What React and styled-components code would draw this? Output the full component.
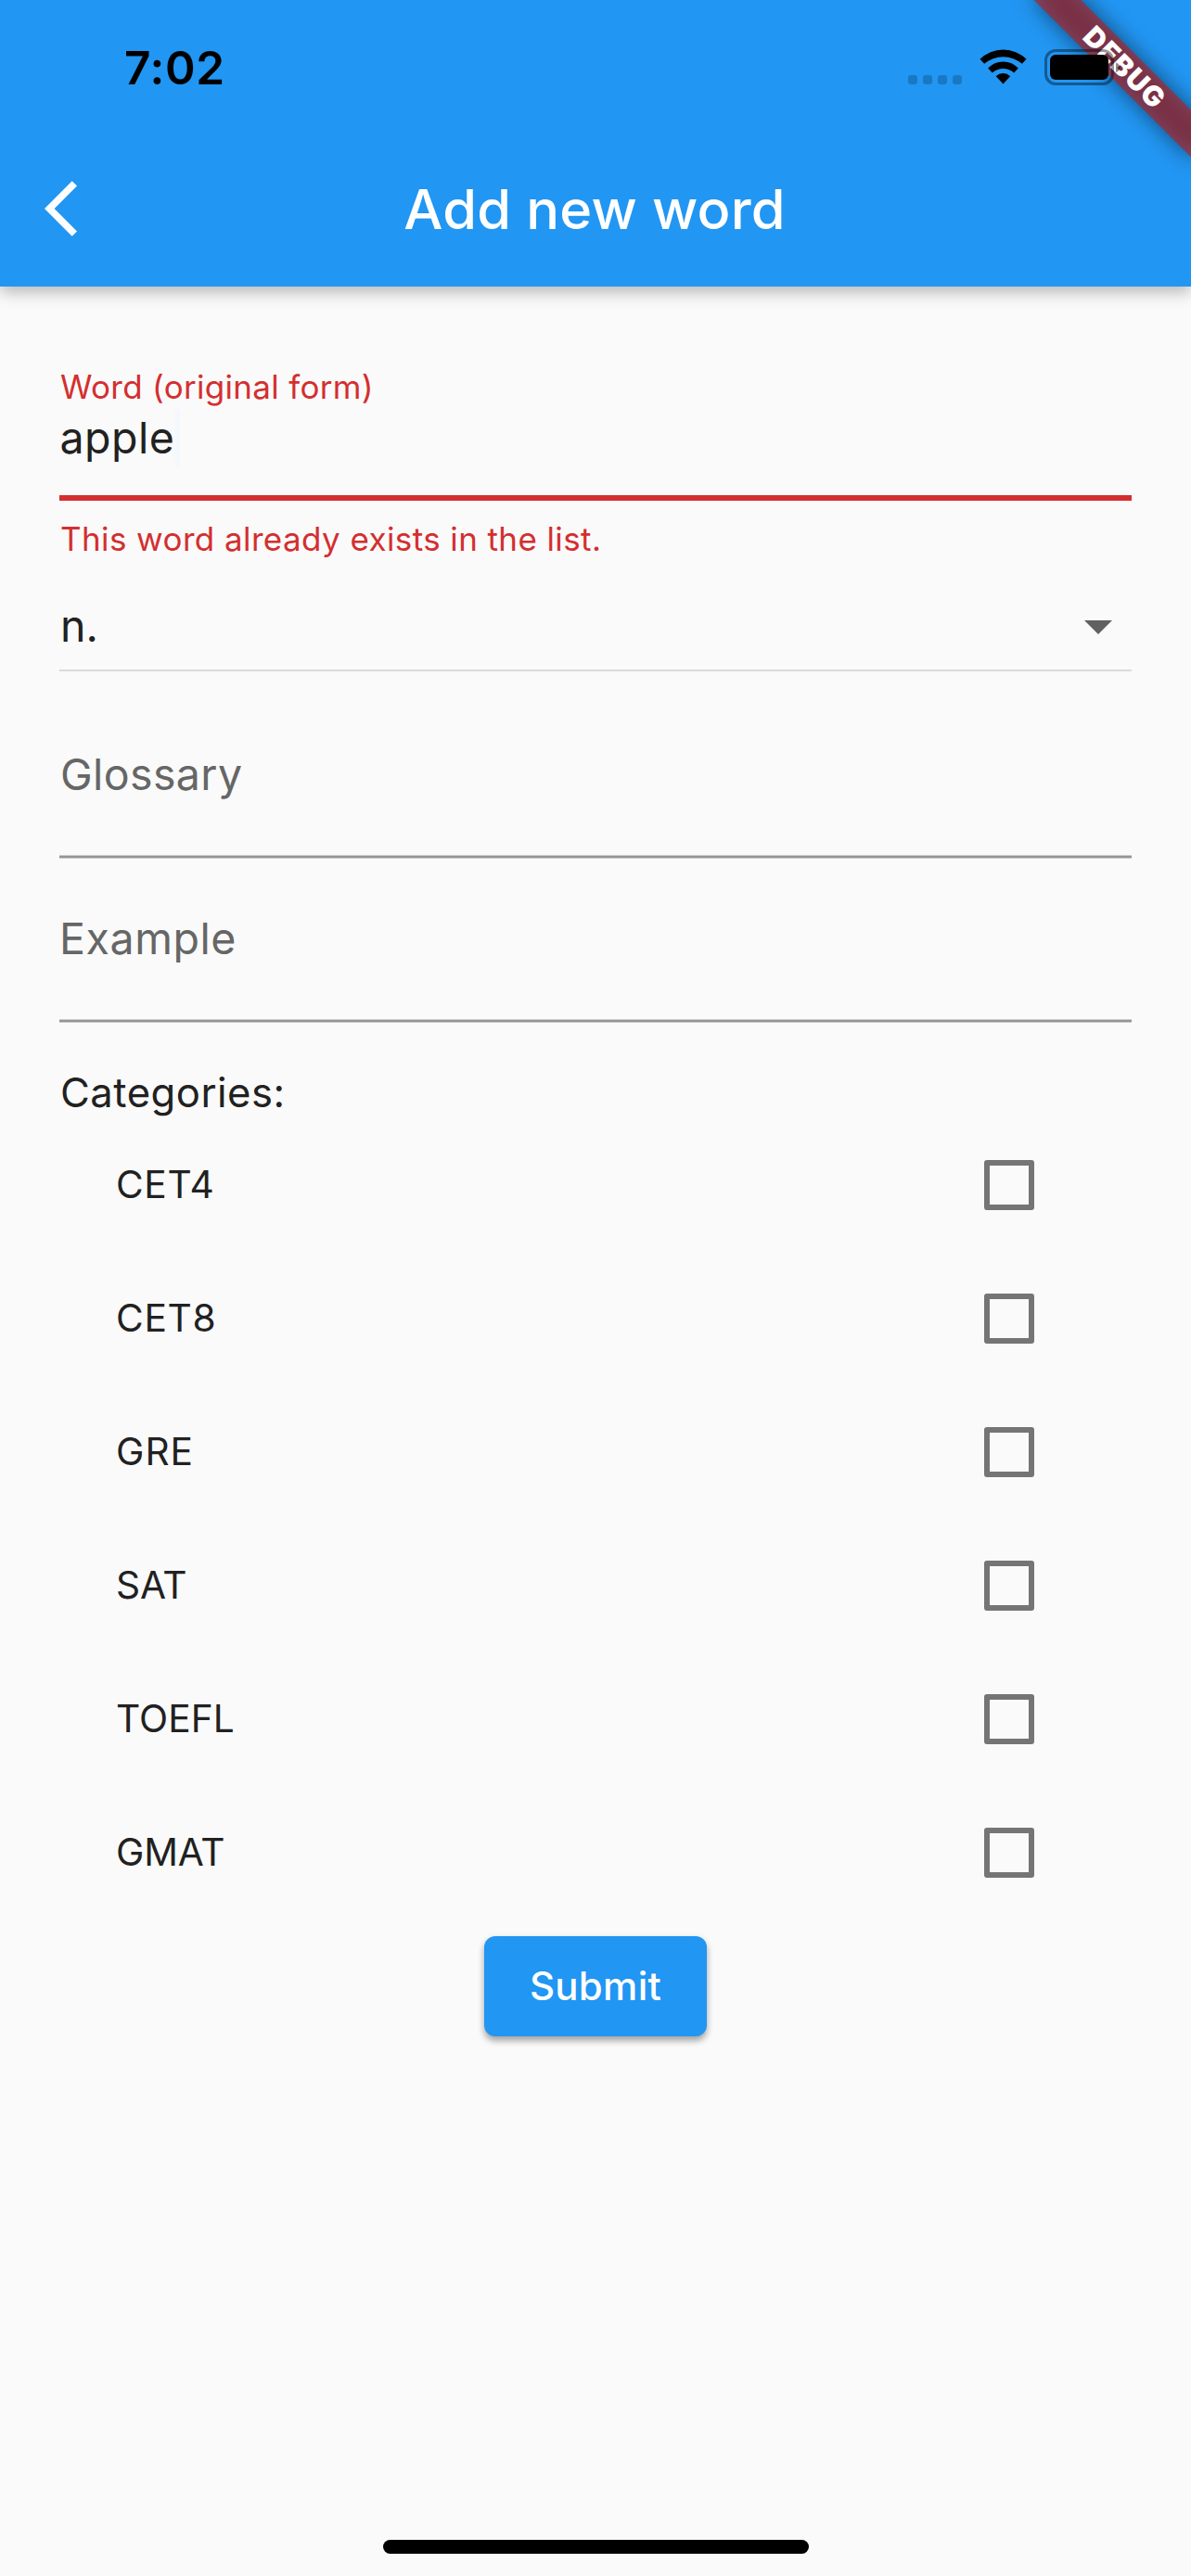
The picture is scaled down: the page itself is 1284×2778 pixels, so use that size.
import React, { useState } from "react";
import styled, { createGlobalStyle } from "styled-components";

const GlobalStyle = createGlobalStyle`
  *, *::before, *::after { box-sizing: border-box; }
  body {
    margin: 0;
    background: #fafafa;
    font-family: Inter, Roboto, sans-serif;
    color: #212121;
  }
`;

const Screen = styled.div`
  position: relative;
  display: flex;
  flex-direction: column;
  width: 1284px;
  height: 2778px;
  overflow: hidden;
  background: #fafafa;
`;

const AppBar = styled.header`
  display: flex;
  flex-direction: column;
  height: 309px;
  flex: none;
  background: #2196f3;
  box-shadow: 0 6px 16px rgba(0, 0, 0, 0.27);
`;

const StatusBar = styled.div`
  position: relative;
  z-index: 2;
  display: flex;
  justify-content: space-between;
  align-items: flex-start;
  height: 141px;
  padding: 53px 76px 0 134px;
  color: #000;
`;

const Clock = styled.span`
  font-size: 49.5px;
  line-height: 40px;
  font-weight: 600;
  letter-spacing: 0.67px;
`;

const StatusIcons = styled.div`
  display: flex;
  align-items: flex-end;
  gap: 19px;
  height: 39px;
`;

const SignalDots = styled.div`
  display: flex;
  gap: 6px;
  padding-bottom: 1px;
`;

const Dot = styled.span`
  width: 10px;
  height: 10px;
  border-radius: 3px;
  background: rgba(0, 0, 0, 0.2);
`;

const WifiSvg = styled.svg`
  display: block;
  width: 51px;
  height: 38px;
  margin-bottom: 1px;
`;

const BatterySvg = styled.svg`
  display: block;
  width: 82px;
  height: 39px;
`;

const Toolbar = styled.div`
  display: grid;
  grid-template-columns: 168px 1fr 168px;
  align-items: center;
  height: 168px;
`;

const BackButton = styled.button`
  display: flex;
  width: 72px;
  height: 72px;
  margin-left: 48px;
  padding: 0;
  border: 0;
  background: none;
  color: #fff;
`;

const Title = styled.h1`
  margin: 0;
  text-align: center;
  font-size: 59.5px;
  line-height: 72px;
  font-weight: 500;
  letter-spacing: 0.2px;
  text-indent: -2px;
  color: #fff;
`;

const BannerShadow = styled.div`
  position: absolute;
  top: 54px;
  left: 1092px;
  width: 240px;
  height: 36px;
  transform: rotate(45deg);
  background: rgba(0, 0, 0, 0.5);
  filter: blur(12px);
`;

const Banner = styled.div`
  position: absolute;
  top: 54px;
  left: 1092px;
  width: 240px;
  height: 36px;
  transform: rotate(45deg);
  background: rgba(183, 28, 28, 0.627);
  text-align: center;
  font-size: 30.2px;
  line-height: 36px;
  font-weight: 900;
  letter-spacing: 1.2px;
  text-indent: 2px;
  color: #fff;
`;

const Form = styled.main`
  display: flex;
  flex-direction: column;
  padding: 87px 64px 0;
`;

const Caption = styled.div`
  height: 42px;
  line-height: 42px;
  font-size: 35px;
  letter-spacing: ${(p) => p.$spacing}px;
  padding-left: 1px;
  color: #d32f2f;
  white-space: nowrap;
`;

const InputRow = styled.div`
  display: flex;
  height: 63px;
  margin-top: 3px;
`;

const InputText = styled.span`
  padding-left: 0.5px;
  font-size: 46.5px;
  line-height: 63px;
  letter-spacing: 0.5px;
`;

const Cursor = styled.span`
  width: 5px;
  height: 63px;
  margin-left: 1px;
  border-radius: 3px;
  background: #f2f8fd;
`;

const ErrorLine = styled.div`
  height: 6px;
  margin: 30px 0 20px;
  background: #d32f2f;
`;

const Select = styled.div`
  display: flex;
  justify-content: space-between;
  align-items: center;
  height: 76px;
  margin-top: 46px;
  padding: 2px 21px 22px 1px;
  border-bottom: 2px solid #dadada;
  font-size: 46.5px;
  line-height: 52px;
`;

const CaretSvg = styled.svg`
  display: block;
  width: 30px;
  height: 15px;
  margin-top: 3px;
`;

const Field = styled.div`
  height: ${(p) => p.$height}px;
  padding-top: ${(p) => p.$top}px;
  padding-left: ${(p) => p.$inset}px;
  font-size: 46.5px;
  line-height: 58px;
  letter-spacing: ${(p) => p.$spacing}px;
  color: #666;
  background: linear-gradient(#cacaca 1px, #959595 1px 3px, #cacaca 3px) left bottom / 100% 4px
    no-repeat;
`;

const SectionTitle = styled.h2`
  margin: 47px 0 0;
  padding-left: 1px;
  height: 56px;
  font-size: 43.6px;
  line-height: 58px;
  font-weight: 400;
  letter-spacing: 0.5px;
`;

const CategoryList = styled.ul`
  display: flex;
  flex-direction: column;
  margin: 0;
  padding: 0;
  list-style: none;
`;

const CategoryRow = styled.li`
  display: flex;
  justify-content: space-between;
  align-items: center;
  height: 144px;
  padding: 0 105px 0 61px;
  font-size: 40.7px;
  line-height: 48px;
  letter-spacing: ${(p) => p.$spacing}px;
`;

const Checkbox = styled.span`
  width: 54px;
  height: 54px;
  border: 6px solid ${(p) => (p.$checked ? "#2196f3" : "#757575")};
  border-radius: 3px;
  background: ${(p) => (p.$checked ? "#2196f3" : "transparent")};
`;

const SubmitButton = styled.button`
  align-self: center;
  width: 240px;
  height: 108px;
  margin-top: 18px;
  padding: 0;
  border: 0;
  border-radius: 12px;
  background: #2196f3;
  box-shadow: 0 5px 7px rgba(0, 0, 0, 0.32), 0 1px 8px rgba(0, 0, 0, 0.06);
  font-family: inherit;
  font-size: 42px;
  line-height: 48px;
  font-weight: 500;
  letter-spacing: 0.28px;
  color: #fff;
`;

const HomeIndicator = styled.div`
  align-self: center;
  width: 459px;
  height: 15px;
  margin: auto 0 24px 1px;
  border-radius: 7.5px;
  background: #000;
`;

const CATEGORIES = [
  { name: "CET4", spacing: 0.64 },
  { name: "CET8", spacing: 0.7 },
  { name: "GRE", spacing: 1.03 },
  { name: "SAT", spacing: -0.21 },
  { name: "TOEFL", spacing: 0.04 },
  { name: "GMAT", spacing: -0.14 },
];

function Wifi() {
  return (
    <WifiSvg viewBox="408.5 160.5 153 114">
      <path d="M410 193A106 106 0 0 1 560 193L546 208A92.4 92.4 0 0 0 424 208Z" />
      <path d="M436 222A67 67 0 0 1 534 222L520 237A52 52 0 0 0 450 237Z" />
      <path d="M461.5 248A34 34 0 0 1 508 248L485 273Z" />
    </WifiSvg>
  );
}

function Battery() {
  return (
    <BatterySvg viewBox="0 0 82 39">
      <rect
        x="1.5"
        y="1.5"
        width="72"
        height="36"
        rx="10.5"
        fill="none"
        stroke="#000"
        strokeOpacity="0.4"
        strokeWidth="3"
      />
      <rect x="6" y="6" width="63" height="27" rx="6" />
      <path d="M77 14.500C83 16.500 83 23 77 25Z" fillOpacity="0.45" />
    </BatterySvg>
  );
}

export default function App() {
  const [checked, setChecked] = useState({});
  const toggle = (name) => setChecked((c) => ({ ...c, [name]: !c[name] }));

  return (
    <>
      <GlobalStyle />
      <Screen>
        <AppBar>
          <StatusBar>
            <Clock>7:02</Clock>
            <StatusIcons>
              <SignalDots>
                <Dot />
                <Dot />
                <Dot />
                <Dot />
              </SignalDots>
              <Wifi />
              <Battery />
            </StatusIcons>
          </StatusBar>
          <Toolbar>
            <BackButton>
              <svg width="72" height="72" viewBox="0 0 24 24" fill="currentColor">
                <path d="M11.67 3.87L9.9 2.1 0 12l9.9 9.9 1.77-1.77L3.54 12z" />
              </svg>
            </BackButton>
            <Title>Add new word</Title>
          </Toolbar>
        </AppBar>
        <BannerShadow />
        <Banner>DEBUG</Banner>

        <Form>
          <Caption $spacing={0.3}>Word (original form)</Caption>
          <InputRow>
            <InputText>apple</InputText>
            <Cursor />
          </InputRow>
          <ErrorLine />
          <Caption $spacing={0.4}>This word already exists in the list.</Caption>
          <Select>
            <span>n.</span>
            <CaretSvg viewBox="0 0 30 15">
              <path d="M0 0H30L15 15Z" fill="#616161" />
            </CaretSvg>
          </Select>
          <Field $height={202} $top={82} $inset={1} $spacing={0.38}>Glossary</Field>
          <Field $height={177} $top={57} $inset={0} $spacing={0.56}>Example</Field>
          <SectionTitle>Categories:</SectionTitle>
          <CategoryList>
            {CATEGORIES.map(({ name, spacing }) => (
              <CategoryRow key={name} $spacing={spacing} onClick={() => toggle(name)}>
                <span>{name}</span>
                <Checkbox role="checkbox" aria-checked={!!checked[name]} $checked={checked[name]} />
              </CategoryRow>
            ))}
          </CategoryList>
          <SubmitButton>Submit</SubmitButton>
        </Form>
        <HomeIndicator />
      </Screen>
    </>
  );
}
